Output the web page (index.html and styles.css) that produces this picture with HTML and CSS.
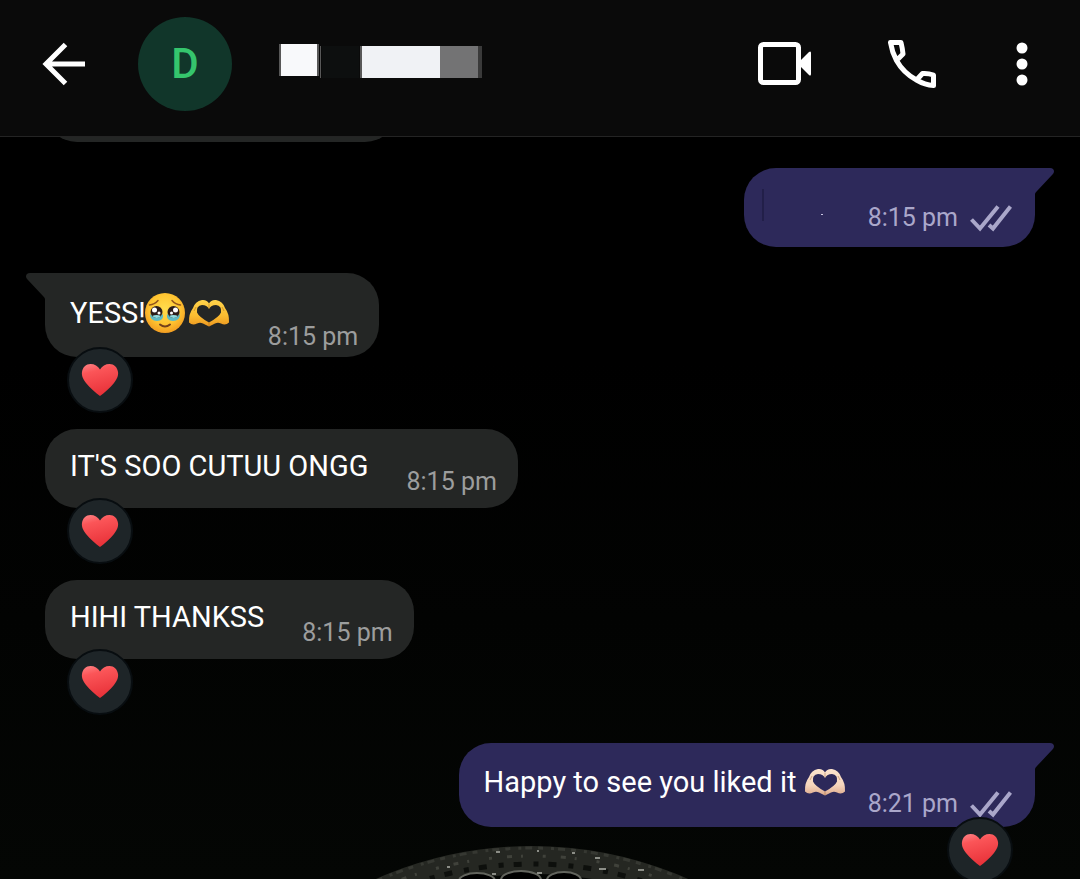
FILE: index.html
```html
<!DOCTYPE html>
<html lang="en">
<head>
<meta charset="utf-8">
<meta name="viewport" content="width=device-width, initial-scale=1">
<title>Chat</title>
<link rel="stylesheet" href="styles.css">
</head>
<body>
<svg class="defs" aria-hidden="true">
  <defs>
    <linearGradient id="heart-fill" x1="0" y1="0" x2="0.3" y2="1">
      <stop offset="0" stop-color="#ff8587"/><stop offset="0.3" stop-color="#fb5558"/><stop offset="1" stop-color="#e9333a"/>
    </linearGradient>
    <radialGradient id="face-fill" cx="0.5" cy="0.4" r="0.62">
      <stop offset="0" stop-color="#ffdc4e"/><stop offset="0.6" stop-color="#ffc531"/><stop offset="1" stop-color="#f19a20"/>
    </radialGradient>
    <linearGradient id="hand-gold" x1="0" y1="0" x2="0" y2="1">
      <stop offset="0" stop-color="#ffd34a"/><stop offset="0.6" stop-color="#fbbc30"/><stop offset="1" stop-color="#ec9720"/>
    </linearGradient>
    <linearGradient id="hand-light" x1="0" y1="0" x2="0" y2="1">
      <stop offset="0" stop-color="#fbe3cd"/><stop offset="0.6" stop-color="#f6d6bd"/><stop offset="1" stop-color="#dca98c"/>
    </linearGradient>
    <symbol id="heart" viewBox="0 0 38 34">
      <path fill="url(#heart-fill)" d="M19 33C15 30 9 25 5 20C1.500 15.500.500 12 1 9C1.700 4 5 1 9.500 1C13.500 1 17 3 19 6.500C21 3 24.500 1 28.500 1C33 1 36.300 4 37 9C37.500 12 36.500 15.500 33 20C29 25 23 30 19 33Z"/>
    </symbol>
    <symbol id="hands" viewBox="0 0 42 28">
      <path fill-rule="evenodd" d="M1 23.500Q.500 15 5 9Q7 2.500 14 1Q19 .500 21 4.500Q23 .500 28 1Q35 2.500 37 9Q41.500 15 41 23.500Q37.500 27 33 24.500Q30 23 27 24.500L21 27.500L15 24.500Q12 23 9 24.500Q4.500 27 1 23.500ZM21 23.500Q31 18 33 13.500Q34 6.500 28 6Q23 6 21 10Q19 6 14 6Q8 6.500 9 13.500Q11 18 21 23.500Z"/>
      <path fill="none" stroke="#8d501f" stroke-opacity=".4" stroke-width="1" d="M6 12L8 8M36 12L34 8M21 5V9.500M21 23.500V27"/>
    </symbol>
    <symbol id="ticks" viewBox="0 0 42 27">
      <path fill="none" stroke="currentColor" stroke-width="4" d="M1.500 14.500L10 23.500L28 1.500M19 20L23 23.500L40.500 1.500"/>
    </symbol>
    <symbol id="tail" viewBox="0 0 21 26">
      <path fill="currentColor" d="M0 0H16Q20 0 20 3.500Q20 5 18.500 6.500L3 23Q1 25 1 26H0Z"/>
    </symbol>
  </defs>
</svg>

<header class="topbar">
  <button class="icon-button" type="button" aria-label="Back">
    <svg width="44" height="44" viewBox="0 0 44 44"><path fill="none" stroke="#fff" stroke-width="5" d="M43 22H5M23.500 2.500L4 22L23.500 41.500"/></svg>
  </button>
  <div class="avatar">D</div>
  <svg class="contact-name" width="204" height="36" viewBox="0 0 204 36" role="img" aria-label="Contact name hidden">
    <path fill="#585858" d="M0 1H3V33H0ZM38 1H40V33H38ZM41 3H42V35H41ZM81 3H83V35H81Z"/>
    <path fill="#f8f9fb" d="M2 1H38V33H2Z"/>
    <path fill="#0d0f0f" d="M43 3H80V35H43Z"/>
    <path fill="#f0f2f5" d="M83 3H161V35H83Z"/>
    <path fill="#737374" d="M161 3H199V35H161Z"/>
    <path fill="#3a3a3a" d="M199 3H203V35H199Z"/>
  </svg>
  <nav class="actions" aria-label="Chat actions">
    <button class="icon-button" type="button" aria-label="Video call">
      <svg width="54" height="44" viewBox="0 0 54 44"><rect x="2.500" y="2.500" width="38" height="38" rx="3" fill="none" stroke="#fff" stroke-width="5"/><path fill="#fff" d="M41 20L51 10Q53 8.500 53 11V32Q53 34.500 51 33L41 23Z"/></svg>
    </button>
    <button class="icon-button" type="button" aria-label="Voice call">
      <svg width="48" height="48" viewBox="1 1 48 48"><path fill="none" stroke="#fff" stroke-width="5" stroke-linejoin="round" d="M3.500 3.500H14Q15.500 9.500 16 15L9.500 21.500Q5 13 3.500 3.500ZM9.500 21.500Q16.500 34 29.500 41L35.500 34.500Q41 34 46.500 36V46.500Q38 46 29.500 41"/></svg>
    </button>
    <button class="icon-button" type="button" aria-label="More options">
      <svg width="20" height="44" viewBox="0 0 20 44"><g fill="#fff"><circle cx="10" cy="6" r="5.500"/><circle cx="10" cy="22" r="5.500"/><circle cx="10" cy="38" r="5.500"/></g></svg>
    </button>
  </nav>
</header>

<main class="thread">
  <svg class="wallpaper" viewBox="0 3 320 36" aria-hidden="true">
    <circle cx="160" cy="392" r="372" fill="none" stroke="#252722" stroke-width="28"/>
    <circle cx="160" cy="392" r="384" fill="none" stroke="#363832" stroke-width="3" stroke-dasharray="5 8 3 4 7 6"/>
    <circle cx="160" cy="392" r="376" fill="none" stroke="#40423b" stroke-width="3" stroke-dasharray="3 15 5 9 2 20"/>
    <circle cx="160" cy="392" r="368" fill="none" stroke="#0d0f0c" stroke-width="5" stroke-dasharray="8 12 5 10"/>
    <g fill="#000" stroke="#62645d" stroke-width="2"><ellipse cx="105" cy="41" rx="18" ry="8"/><ellipse cx="149" cy="40" rx="20" ry="9"/><ellipse cx="192" cy="40" rx="17" ry="8"/></g>
    <path stroke="#8c8e87" stroke-width="2" d="M223 18H228M227 29H234M266 30H272M200 13H203M165 33H170M75 27H78M124 12H128M165 11H167M120 34H124"/>
  </svg>

  <article class="message in clipped"><div class="bubble"></div></article>

  <article class="message out">
    <div class="bubble">
      <svg class="tail" aria-hidden="true"><use href="#tail"/></svg>
      <svg class="hidden-text" viewBox="0 0 84 40" role="img" aria-label="Message hidden"><path fill="#221f49" d="M0 4H2V36H0Z"/><path fill="#c9c7e2" d="M59 29H61V30H59Z"/></svg>
      <div class="meta"><time>8:15 pm</time><svg class="ticks" role="img" aria-label="Delivered"><use href="#ticks"/></svg></div>
    </div>
  </article>

  <article class="message in">
    <div class="bubble tall">
      <svg class="tail" aria-hidden="true"><use href="#tail"/></svg>
      <p class="text">YESS!<svg class="face" viewBox="0 0 42 42" role="img" aria-label="face holding back tears">
        <circle cx="21" cy="21" r="20" fill="url(#face-fill)"/>
        <path fill="none" stroke="#93551c" stroke-width="1.500" stroke-linecap="round" d="M5.500 13Q10.500 12.500 14 8.500M28 8.500Q31.500 12.500 36.500 13"/>
        <path fill="#5cb9c4" d="M6 22Q9 25 12.500 23.500Q16 25 19 22Q20 29 13 29Q6 29 6 22ZM23 22Q26 25 29.500 23.500Q33 25 36 22Q36 29 29 29Q22 29 23 22Z"/>
        <circle cx="12.500" cy="20" r="6" fill="#2b1c1b"/><circle cx="29.500" cy="20" r="6" fill="#2b1c1b"/>
        <path fill="#8fdbe0" d="M8 24Q12.500 22 17 24Q13 28 8 24ZM25 24Q29.500 22 34 24Q30 28 25 24Z"/>
        <g fill="#fff"><circle cx="10.500" cy="18" r="2.500"/><circle cx="15" cy="21" r="1.500"/><circle cx="31.500" cy="18" r="2.500"/><circle cx="27.500" cy="21" r="1.500"/></g>
        <path fill="none" stroke="#73401b" stroke-width="2" stroke-linecap="round" d="M16 32.500Q21 36.500 26 32.500"/>
      </svg><svg class="hands gold" role="img" aria-label="heart hands"><use href="#hands"/></svg></p>
      <div class="meta"><time>8:15 pm</time></div>
    </div>
    <button class="reaction" type="button" aria-label="Heart reaction"><svg class="heart"><use href="#heart"/></svg></button>
  </article>

  <article class="message in grouped">
    <div class="bubble">
      <p class="text">IT'S SOO CUTUU ONGG</p>
      <div class="meta"><time>8:15 pm</time></div>
    </div>
    <button class="reaction" type="button" aria-label="Heart reaction"><svg class="heart"><use href="#heart"/></svg></button>
  </article>

  <article class="message in grouped">
    <div class="bubble">
      <p class="text">HIHI THANKSS</p>
      <div class="meta"><time>8:15 pm</time></div>
    </div>
    <button class="reaction" type="button" aria-label="Heart reaction"><svg class="heart"><use href="#heart"/></svg></button>
  </article>

  <article class="message out">
    <div class="bubble tall">
      <svg class="tail" aria-hidden="true"><use href="#tail"/></svg>
      <p class="text">Happy to see you liked it <svg class="hands light" role="img" aria-label="heart hands"><use href="#hands"/></svg></p>
      <div class="meta"><time>8:21 pm</time><svg class="ticks" role="img" aria-label="Delivered"><use href="#ticks"/></svg></div>
    </div>
    <button class="reaction" type="button" aria-label="Heart reaction"><svg class="heart"><use href="#heart"/></svg></button>
  </article>
</main>
</body>
</html>
```

FILE: styles.css
```css
* {
  box-sizing: border-box;
}

body {
  margin: 0;
  height: 100vh;
  display: flex;
  flex-direction: column;
  overflow: hidden;
  background: #000;
  color: #fff;
  font-family: Roboto, "Noto Sans", sans-serif;
}

button {
  border: 0;
  padding: 0;
  background: none;
  font: inherit;
  cursor: pointer;
}

svg {
  display: block;
}

.defs {
  position: absolute;
  width: 0;
  height: 0;
}

.topbar {
  flex: none;
  display: flex;
  align-items: center;
  padding: 17px 48px 25px 42px;
  background: #0a0a0a;
  border-bottom: 1px solid #242424;
}

.icon-button {
  display: flex;
}

.avatar {
  width: 94px;
  height: 94px;
  margin-left: 52px;
  border-radius: 50%;
  background: #11362a;
  color: #35c56d;
  font-size: 42px;
  font-weight: 500;
  line-height: 94px;
  text-align: center;
}

.contact-name {
  margin-left: 47px;
  margin-bottom: 6px;
}

.actions {
  display: flex;
  align-items: center;
  gap: 76px;
  margin-left: auto;
}

.thread {
  position: relative;
  flex: 1;
  min-height: 0;
  overflow: hidden;
  display: flex;
  flex-direction: column;
  gap: 26px;
  padding: 0 45px;
  background: linear-gradient(#000 30%, #040604);
}

.wallpaper {
  position: absolute;
  bottom: 0;
  left: 50%;
  width: 320px;
  margin-left: -168px;
}

.message {
  position: relative;
  flex: none;
  display: flex;
  flex-direction: column;
  align-items: flex-start;
}

.message.out {
  align-items: flex-end;
}

.message.grouped {
  margin-top: -12px;
}

.message.clipped {
  margin-top: -74px;
}

.clipped .bubble {
  width: 352px;
}

.bubble {
  position: relative;
  display: flex;
  align-items: flex-start;
  gap: 38px;
  min-height: 79px;
  padding: 17px 21px 12px 25px;
  border-radius: 32px;
  background: #242625;
}

.out .bubble {
  gap: 22px;
  padding: 17px 23px 15px 25px;
  background: #2d295a;
}

.bubble.tall {
  min-height: 84px;
  padding-top: 19px;
  padding-bottom: 6px;
}

.out .bubble.tall {
  padding-bottom: 9px;
}

.bubble:has(.tail) {
  border-top-left-radius: 0;
}

.out .bubble:has(.tail) {
  border-top-left-radius: 32px;
  border-top-right-radius: 0;
}

.tail {
  position: absolute;
  top: 0;
  right: 100%;
  width: 21px;
  height: 26px;
  margin-right: -1px;
  color: #242625;
  transform: scaleX(-1);
}

.out .tail {
  right: auto;
  left: 100%;
  margin-right: 0;
  margin-left: -1px;
  color: #2d295a;
  transform: none;
}

.text {
  display: flex;
  align-items: center;
  margin: 0;
  font-size: 29px;
  line-height: 40px;
  white-space: pre;
}

.face {
  width: 42px;
  height: 42px;
  margin-left: -2px;
}

.hands {
  width: 42px;
  height: 28px;
  margin-left: 2px;
}

.gold {
  fill: url(#hand-gold);
}

.light {
  fill: url(#hand-light);
  margin-left: 0;
}

.hidden-text {
  width: 84px;
  height: 40px;
  margin-left: -7px;
}

.meta {
  align-self: flex-end;
  display: flex;
  align-items: center;
  gap: 12px;
  color: #9c9d9d;
  font-size: 25px;
  line-height: 28px;
  white-space: nowrap;
}

.out .meta {
  color: #aaa7ca;
}

.ticks {
  width: 42px;
  height: 27px;
}

.reaction {
  z-index: 1;
  display: flex;
  align-items: center;
  justify-content: center;
  width: 66px;
  height: 66px;
  margin: -10px 22px 2px;
  border: 2px solid #080d10;
  border-radius: 50%;
  background: #1e2528;
}

.heart {
  width: 38px;
  height: 34px;
}
```
